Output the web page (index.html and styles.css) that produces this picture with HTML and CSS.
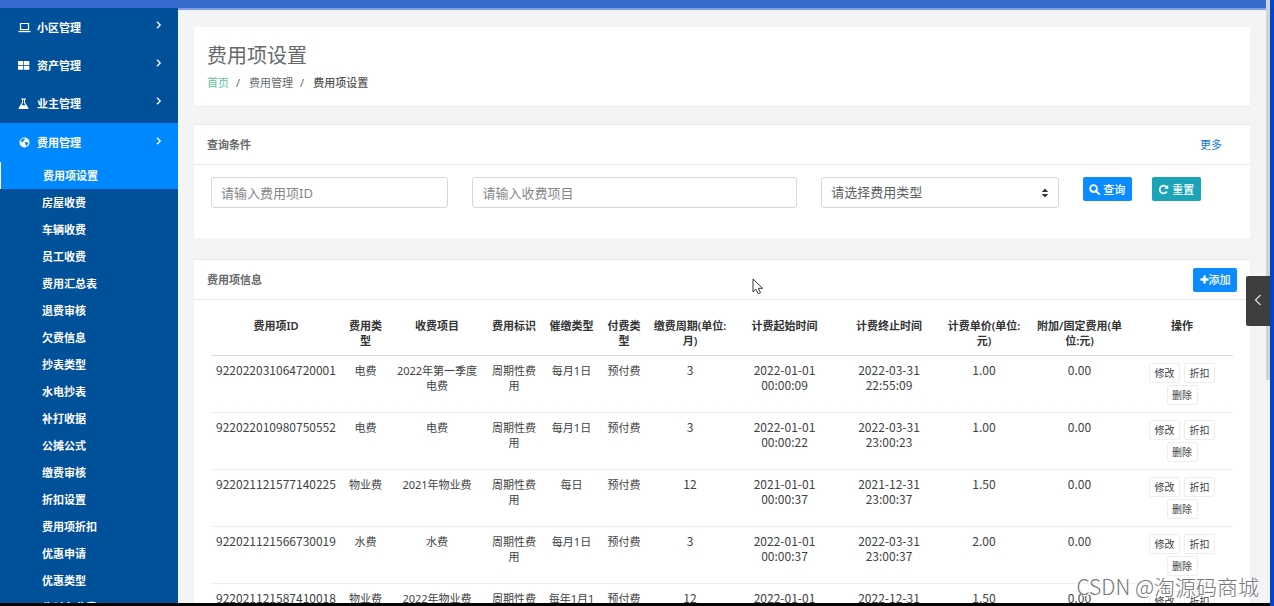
FILE: index.html
```html
<!DOCTYPE html>
<html lang="zh-CN">
<head>
<meta charset="utf-8">
<title>费用项设置</title>
<link rel="stylesheet" href="styles.css">
</head>
<body>
<div class="window">
  <div class="app">
    <div class="topbar"></div>
    <div class="columns">
      <nav class="sidebar" id="sidebar"></nav>
      <main class="content">
        <section class="card page-head">
          <h1>费用项设置</h1>
          <ol class="crumbs">
            <li><a href="#">首页</a></li>
            <li>费用管理</li>
            <li><strong>费用项设置</strong></li>
          </ol>
        </section>
        <section class="card panel">
          <header class="panel-head"><h2>查询条件</h2><a class="more" href="#">更多</a></header>
          <form class="filters">
            <input type="text" placeholder="请输入费用项ID" aria-label="费用项ID">
            <input type="text" placeholder="请输入收费项目" aria-label="收费项目">
            <div class="select-wrap">
              <select aria-label="费用类型"><option>请选择费用类型</option></select>
              <svg class="caret" viewBox="0 0 8 10" width="8" height="10"><path d="M4 0.5 7.2 4H.8zM4 9.500.8 6h6.4z"/></svg>
            </div>
            <div class="filter-buttons">
              <button type="button" class="btn primary"><svg viewBox="0 0 12 12" width="11" height="11"><circle cx="5" cy="5" r="3.700" fill="none" stroke="#fff" stroke-width="2"/><path d="m7.800 7.800 3.200 3.200" stroke="#fff" stroke-width="2.200" stroke-linecap="round"/></svg>查询</button>
              <button type="button" class="btn teal"><svg viewBox="0 0 12 12" width="11" height="11"><path d="M9.600 8.200A4.200 4.200 0 1 1 9 3" fill="none" stroke="#fff" stroke-width="1.900"/><path d="M11.200.8v4.400H6.800z" fill="#fff"/></svg>重置</button>
            </div>
          </form>
        </section>
        <section class="card panel">
          <header class="panel-head"><h2>费用项信息</h2><button type="button" class="btn primary add"><svg viewBox="0 0 10 10" width="9" height="9"><path d="M5 .5v9M.5 5h9" stroke="#fff" stroke-width="2.800"/></svg>添加</button></header>
          <div class="table-box">
            <table>
              <colgroup><col class="w-id"><col class="w-kind"><col class="w-name"><col class="w-flag"><col class="w-call"><col class="w-pay"><col class="w-cycle"><col class="w-start"><col class="w-end"><col class="w-price"><col class="w-extra"><col class="w-ops"></colgroup>
              <thead><tr><th>费用项ID</th><th>费用类型</th><th>收费项目</th><th>费用标识</th><th>催缴类型</th><th>付费类型</th><th>缴费周期(单位:月)</th><th>计费起始时间</th><th>计费终止时间</th><th>计费单价(单位:元)</th><th>附加/固定费用(单位:元)</th><th>操作</th></tr></thead>
              <tbody id="rows"></tbody>
            </table>
          </div>
        </section>
      </main>
    </div>
    <svg class="pointer" viewBox="0 0 12 18" width="12" height="18"><path d="M1 1v13l3-2.800 2.200 4.600 2.300-1-2.200-4.500h4.200z" fill="#fff" stroke="#333"/></svg>
    <div class="watermark">CSDN @淘源码商城</div>
  </div>
  <div class="track"><div class="thumb"></div></div>
  <div class="edge"></div>
  <div class="bottom"></div>
  <button class="drawer" type="button" aria-label="展开"><svg viewBox="0 0 8 12" width="8" height="12"><path d="M6.500 1 1.500 6l5 5" fill="none" stroke="#ddd" stroke-width="1.200"/></svg></button>
</div>
<script src="app.js"></script>
</body>
</html>
```
FILE: styles.css
```css
* { box-sizing: border-box; }
body {
  margin: 0;
  font: 11px/15px "Noto Sans", "Noto Sans CJK SC", sans-serif;
  color: #676a6c;
}
h1, h2, ol { margin: 0; padding: 0; font-weight: normal; }
button, input, select { font: inherit; margin: 0; }
a { text-decoration: none; color: inherit; }

.window {
  display: grid;
  grid-template: minmax(0, 1fr) 3px / minmax(0, 1fr) 4px 4px;
  height: 100vh;
  position: relative;
  overflow: hidden;
}
.app { display: flex; flex-direction: column; min-height: 0; position: relative; overflow: hidden; }
.topbar { height: 8px; flex: none; background: #376ace; }
.columns { display: flex; flex: 1; min-height: 0; }
.track { background: #f1f1f1; }
.thumb { height: 63%; background: #d2d3d5; }
.edge { background: #0047c4; grid-row: span 2; }
.bottom { background: #000; grid-column: span 2; }

.sidebar {
  width: 178px;
  flex: none;
  overflow: hidden;
  background: #00509a;
  color: #fff;
  font-weight: bold;
}
.sidebar a { display: flex; align-items: center; }
.menu { height: 38px; padding: 0 16px 0 18px; gap: 6px; }
.menu svg { flex: none; fill: #fff; }
.menu span { flex: 1; }
.menu .arrow { margin-bottom: 4px; }
.menu.open { height: 39px; margin-top: 1px; background: #0089ff; }
.sub { height: 27px; padding-left: 42px; }
.sub.current { background: #0089ff; border-left: 1px solid #fff; }

.content {
  flex: 1;
  min-width: 0;
  padding: 17px 16px 0;
  border-top: 2px solid #7f9fde;
  background: #f3f4f6;
  overflow: hidden;
}
.card { background: #fff; }
.page-head { padding: 16px 13px 15px; border-bottom: 1px solid #e7eaec; }
h1 { font-size: 20px; line-height: 26px; }
.crumbs { display: flex; list-style: none; padding-top: 6px; line-height: 16px; }
.page-head a { color: #5fc3a0; }
.crumbs li + li::before { content: "/"; padding: 0 9px 0 7px; }
.crumbs strong { font-weight: 500; color: #555; }
.panel { margin-top: 17px; border-top: 1px solid #e7eaec; }
.panel + .panel { margin-top: 21px; }
.panel-head {
  display: flex;
  align-items: center;
  justify-content: space-between;
  height: 40px;
  padding: 0 13px;
  border-bottom: 1px solid #e7eaec;
}
h2 { font-size: 11px; font-weight: 600; }
.more { color: #1a7bd0; padding-right: 15px; }

.filters {
  display: grid;
  grid-template-columns: 237fr 324fr 237fr 154fr;
  column-gap: 24px;
  padding: 12px 13px 30px 17px;
}
.filters input, .filters select {
  width: 100%;
  height: 31px;
  padding: 0 9px;
  border: 1px solid #d5d8da;
  border-radius: 3px;
  background: #fff;
  color: #5c5f61;
  font-size: 13px;
  appearance: none;
}
.filters input::placeholder { color: #85888a; opacity: 1; }
.select-wrap { position: relative; }
.caret { position: absolute; right: 10px; top: 11px; fill: #333; }
.filter-buttons { display: flex; gap: 20px; align-items: flex-start; }
.btn {
  display: flex;
  align-items: center;
  justify-content: center;
  gap: 3px;
  width: 49px;
  height: 24px;
  padding: 0;
  border: 0;
  border-radius: 2px;
  color: #fff;
  font-weight: 500;
}
.primary { background: #0b8bff; }
.teal { background: #1ba3b8; }
.add { width: 44px; gap: 0; }

.table-box { padding: 11px 17px; }
table { width: 100%; table-layout: fixed; border-collapse: collapse; color: #404244; text-align: center; }
th, td { padding: 7px 4px; vertical-align: top; }
th { font-weight: 600; color: #333; border-bottom: 1px solid #d9dde0; }
td { border-bottom: 1px solid #eceeef; }
.num { padding-top: 6px; font-family: "Noto Sans CJK SC", sans-serif; font-size: 12px; }
.w-id { width: 130px; }
.w-kind { width: 49px; }
.w-name { width: 94px; }
.w-flag { width: 60px; }
.w-call { width: 55px; }
.w-pay { width: 50px; }
.w-cycle { width: 82px; }
.w-start { width: 107px; }
.w-end { width: 102px; }
.w-price { width: 88px; }
.w-extra { width: 103px; }
.w-ops { width: 102px; }
.ops { display: flex; flex-wrap: wrap; justify-content: center; gap: 2px 4px; }
.ops button {
  width: 31px;
  height: 20px;
  padding: 0;
  border: 1px solid #eceeef;
  border-radius: 2px;
  background: #fff;
  color: #404244;
  font-size: 10px;
}

.drawer {
  position: absolute;
  right: 4px;
  top: 276px;
  width: 24px;
  height: 50px;
  padding: 0;
  border: 0;
  border-radius: 2px 0 0 2px;
  background: #3e3e3e;
}
.pointer { position: absolute; left: 752px; top: 278px; }
.watermark {
  position: absolute;
  right: 7px;
  bottom: 3px;
  font-family: "Noto Sans CJK SC", sans-serif;
  font-weight: 300;
  font-size: 21px;
  line-height: 28px;
  color: #77797c;
  text-shadow: 1px 1px 0 #fff;
}
```
FILE: app.js
```javascript
const icons = {
  laptop: '<path d="M2.500 2.500h8v6h-8z" fill="none" stroke="#fff" stroke-width="1.200"/><path d="M.5 9.800h12v1.400H.5z"/>',
  blocks: '<path d="M0 2h5.300v4H0zM6 2h5.300v4H6zM0 6.700h5.300v4H0zM6 6.700h5.300v4H6z"/>',
  flask: '<path d="M3 1.500h5v1H7v3l3.500 5.500q.3 1-1 1h-8q-1.300 0-1-1L4 5.500v-3H3zm2 1.200v3.200L3.600 8.300h3.800L6 5.900V2.700z" fill-rule="evenodd"/>',
  globe: '<circle cx="6.500" cy="6.500" r="5"/><path d="m4 3 2-.8 1 1L5.500 5 4.500 6.500 2.500 5zM6.500 6.500l2.500-.5 1.500 1.200L8.500 10 7.500 8.500z" fill="#0089ff"/>'
};
const arrow = '<svg class="arrow" viewBox="0 0 6 8" width="6" height="8"><path d="m1 .8 3.200 3.200L1 7.200" fill="none" stroke="#fff" stroke-width="1.300"/></svg>';
const menu = (icon, text, cls) => `<a href="#" class="menu ${cls || ''}"><svg viewBox="0 0 13 13" width="13" height="13">${icons[icon]}</svg><span>${text}</span>${arrow}</a>`;
const subs = ['费用项设置', '房屋收费', '车辆收费', '员工收费', '费用汇总表', '退费审核', '欠费信息', '抄表类型', '水电抄表', '补打收据', '公摊公式', '缴费审核', '折扣设置', '费用项折扣', '优惠申请', '优惠类型', '临时车收费'];
document.getElementById('sidebar').innerHTML =
  menu('laptop', '小区管理') + menu('blocks', '资产管理') + menu('flask', '业主管理') + menu('globe', '费用管理', 'open') +
  subs.map((t, i) => `<a href="#" class="sub${i ? '' : ' current'}">${t}</a>`).join('');

const data = [
  ['922022031064720001', '电费', '2022年第一季度电费', '每月1日', '3', '2022-01-01 00:00:09', '2022-03-31 22:55:09', '1.00'],
  ['922022010980750552', '电费', '电费', '每月1日', '3', '2022-01-01 00:00:22', '2022-03-31 23:00:23', '1.00'],
  ['922021121577140225', '物业费', '2021年物业费', '每日', '12', '2021-01-01 00:00:37', '2021-12-31 23:00:37', '1.50'],
  ['922021121566730019', '水费', '水费', '每月1日', '3', '2022-01-01 00:00:37', '2022-03-31 23:00:37', '2.00'],
  ['922021121587410018', '物业费', '2022年物业费', '每年1月1日', '12', '2022-01-01 00:00:00', '2022-12-31 23:00:00', '1.50']
];
document.getElementById('rows').innerHTML = data.map(r =>
  `<tr><td class="num">${r[0]}</td><td>${r[1]}</td><td>${r[2]}</td><td>周期性费用</td><td>${r[3]}</td><td>预付费</td><td class="num">${r[4]}</td><td class="num">${r[5]}</td><td class="num">${r[6]}</td><td class="num">${r[7]}</td><td class="num">0.00</td><td><div class="ops"><button type="button">修改</button><button type="button">折扣</button><button type="button">删除</button></div></td></tr>`).join('');
```
